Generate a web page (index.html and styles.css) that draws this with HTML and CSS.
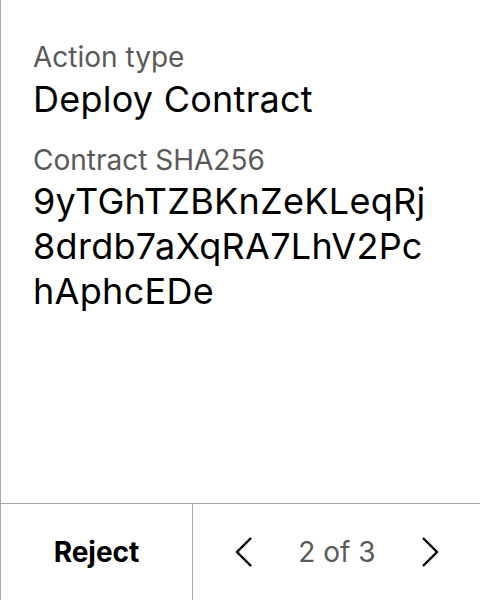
FILE: index.html
```html
<!DOCTYPE html>
<html>
<head>
<meta charset="utf-8">
<link rel="stylesheet" href="styles.css">
</head>
<body>
<div class="screen">
  <div class="content">
    <div class="label">Action type</div>
    <div class="value">Deploy Contract</div>
    <div class="label second">Contract SHA256</div>
    <div class="hash">9yTGhTZBKnZeKLeqRj<br>8drdb7aXqRA7LhV2Pc<br>hAphcEDe</div>
  </div>
  <div class="footer">
    <div class="reject">Reject</div>
    <div class="pager">
      <svg class="chev" width="20" height="32" viewBox="0 0 20 32"><path d="M17 2 L3 16 L17 30" fill="none" stroke="#000" stroke-width="2.4"/></svg>
      <span class="count">2 of 3</span>
      <svg class="chev" width="20" height="32" viewBox="0 0 20 32"><path d="M3 2 L17 16 L3 30" fill="none" stroke="#000" stroke-width="2.4"/></svg>
    </div>
  </div>
</div>
</body>
</html>
```
FILE: styles.css
```css
html, body {
  margin: 0;
  padding: 0;
  background: #fff;
}
.screen {
  width: 480px;
  height: 600px;
  box-sizing: border-box;
  border-left: 1px solid #a8a8a8;
  display: flex;
  flex-direction: column;
  font-family: Inter, "Noto Sans", sans-serif;
}
.content {
  flex: 1;
  padding: 40px 0 0 32px;
}
.label {
  font-size: 28px;
  line-height: 34px;
  color: #5a5a5a;
}
.label.second {
  margin-top: 22px;
}
.value {
  font-size: 36px;
  line-height: 44px;
  letter-spacing: 0.25px;
  color: #000;
  margin-top: 3px;
}
.hash {
  font-size: 36px;
  line-height: 45px;
  letter-spacing: 0.3px;
  color: #000;
  margin-top: 2px;
}
.footer {
  height: 96px;
  border-top: 1px solid #a8a8a8;
  display: flex;
}
.reject {
  width: 191px;
  border-right: 1px solid #a8a8a8;
  display: flex;
  align-items: center;
  justify-content: center;
  font-size: 28px;
  font-weight: 700;
  color: #000;
}
.pager {
  flex: 1;
  display: flex;
  align-items: center;
  justify-content: space-between;
  padding: 0 40px 0 41px;
}
.count {
  font-size: 28px;
  color: #5a5a5a;
}
```
